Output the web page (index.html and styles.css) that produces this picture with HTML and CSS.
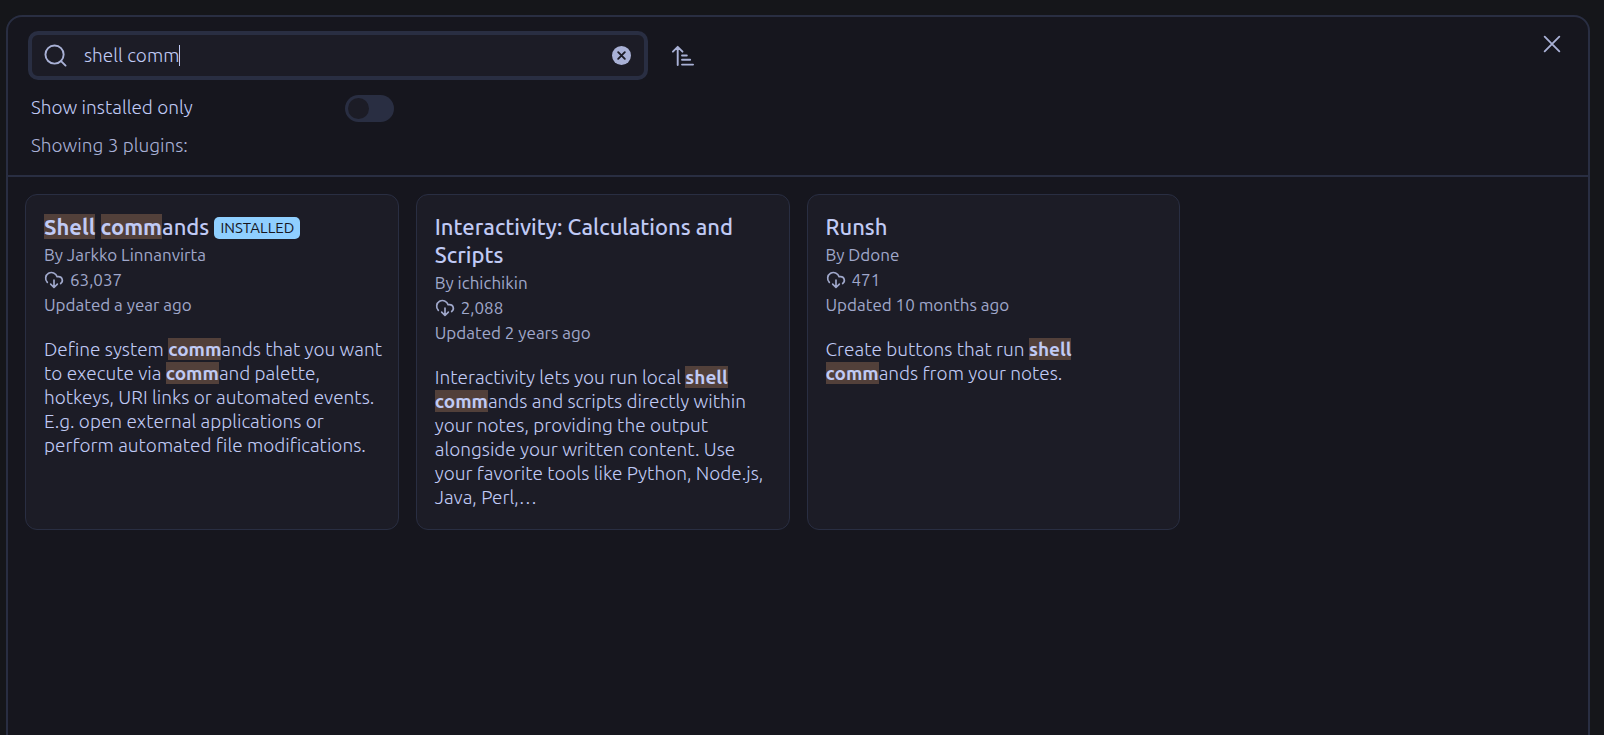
FILE: index.html
```html
<!DOCTYPE html>
<html lang="en">
<head>
  <meta charset="UTF-8">
  <title>Community plugins</title>
  <meta name="viewport" content="width=device-width, initial-scale=1.0">
  <link rel="stylesheet" href="styles.css">
</head>
<body>
  <svg class="sprite" aria-hidden="true">
    <symbol id="cloud" viewBox="0 0 24 24">
      <path d="M4 14.9A7 7 0 1 1 15.71 8h1.79a4.5 4.5 0 0 1 2.5 8.24"/>
      <path d="M12 12v9M8 17l4 4 4-4"/>
    </symbol>
  </svg>

  <main class="modal">
    <button class="icon-btn close" aria-label="Close">
      <svg viewBox="0 0 24 24"><path d="M4 4l16 16M20 4L4 20"/></svg>
    </button>

    <header class="controls">
      <div class="search-row">
        <div class="search">
          <svg class="search-icon" viewBox="0 0 24 24"><circle cx="11" cy="11" r="9.5"/><path d="M22.5 22.5l-4.7-4.7"/></svg>
          <input type="text" id="search" aria-label="Search community plugins" value="shell comm">
          <span class="caret"></span>
          <button class="icon-btn clear" aria-label="Clear search">
            <svg viewBox="0 0 20 20"><circle cx="10" cy="10" r="10"/><path d="M6.5 6.5l7 7M13.5 6.5l-7 7"/></svg>
          </button>
        </div>
        <button class="icon-btn sort" aria-label="Change sort order">
          <svg viewBox="0 0 24 24"><path d="M2 8l5-5 5 5M7 3v19M11.5 12h5M11.5 16.5h8.5M11.5 21.5h11.5"/></svg>
        </button>
      </div>
      <div class="setting">
        <label for="installed">Show installed only</label>
        <input type="checkbox" class="toggle" id="installed">
      </div>
      <div class="summary">Showing 3 plugins:</div>
    </header>

    <section class="plugins">
      <article class="card">
        <h2 class="name"><mark>Shell</mark> <mark>comm</mark>ands <span class="badge">INSTALLED</span></h2>
        <div class="meta">By Jarkko Linnanvirta</div>
        <div class="meta"><svg><use href="#cloud"/></svg>63,037</div>
        <div class="meta">Updated a year ago</div>
        <p class="desc">Define system <mark>comm</mark>ands that you want to execute via <mark>comm</mark>and palette, hotkeys, URI links or automated events. E.g. open external applications or perform automated file modifications.</p>
      </article>

      <article class="card">
        <h2 class="name">Interactivity: Calculations and Scripts</h2>
        <div class="meta">By ichichikin</div>
        <div class="meta"><svg><use href="#cloud"/></svg>2,088</div>
        <div class="meta">Updated 2 years ago</div>
        <p class="desc">Interactivity lets you run local <mark>shell</mark> <mark>comm</mark>ands and scripts directly within your notes, providing the output alongside your written content. Use your favorite tools like Python, Node.js, Java, Perl,…</p>
      </article>

      <article class="card">
        <h2 class="name">Runsh</h2>
        <div class="meta">By Ddone</div>
        <div class="meta"><svg><use href="#cloud"/></svg>471</div>
        <div class="meta">Updated 10 months ago</div>
        <p class="desc">Create buttons that run <mark>shell</mark> <mark>comm</mark>ands from your notes.</p>
      </article>
    </section>
  </main>
</body>
</html>
```

FILE: styles.css
```css
* {
  box-sizing: border-box;
}
body {
  margin: 0;
  padding: 15px 14px 0 6px;
  height: 100vh;
  overflow: hidden;
  background: #15161a;
  color: #c0caf5;
  font-family: Ubuntu, "Noto Sans", sans-serif;
  font-size: 19px;
  font-weight: 300;
  line-height: 24px;
}
.sprite {
  display: none;
}
svg {
  display: block;
  fill: none;
  stroke: currentColor;
  stroke-width: 2;
  stroke-linecap: round;
  stroke-linejoin: round;
}
.modal {
  position: relative;
  height: 100vh;
  background: #16161e;
  border: 2px solid #292e42;
  border-radius: 16px;
}
.icon-btn {
  padding: 0;
  border: none;
  background: none;
  color: #a9b1d6;
  cursor: pointer;
}
.close {
  position: absolute;
  top: 16px;
  right: 25px;
}
.close svg {
  width: 22px;
  height: 22px;
}
.controls {
  padding: 14px 20px 18px;
  border-bottom: 2px solid #292e42;
}
.search-row {
  display: flex;
  align-items: center;
  gap: 23px;
}
.search {
  display: flex;
  align-items: center;
  width: 620px;
  height: 49px;
  padding: 0 13px 0 12px;
  background: #1c1c26;
  border: 4px solid #292e42;
  border-radius: 10px;
}
.search-icon {
  width: 23px;
  height: 23px;
  color: #a9b1d6;
}
.search input {
  field-sizing: content;
  margin-left: 17px;
  padding: 0 0 2px;
  border: none;
  outline: none;
  background: none;
  color: inherit;
  font: inherit;
}
.caret {
  width: 1px;
  height: 21px;
  background: #c0caf5;
}
.clear {
  margin-left: auto;
}
.clear svg {
  width: 19px;
  height: 19px;
}
.clear circle {
  fill: currentColor;
  stroke: none;
}
.clear path {
  stroke: #1c1c26;
}
.sort svg {
  width: 23px;
  height: 23px;
}
.setting {
  display: flex;
  align-items: flex-start;
  justify-content: space-between;
  width: 363px;
  margin: 15px 0 11px 3px;
}
.toggle {
  appearance: none;
  width: 49px;
  height: 27px;
  margin: 0;
  padding: 3px;
  background: #292e42;
  border-radius: 14px;
}
.toggle::before {
  content: "";
  display: block;
  width: 21px;
  height: 21px;
  border-radius: 50%;
  background: #1c1c26;
}
.toggle:checked::before {
  margin-left: auto;
}
.summary {
  margin-left: 3px;
  color: #a9b1d6;
}
.plugins {
  display: grid;
  grid-template-columns: repeat(auto-fill, minmax(350px, 1fr));
  gap: 17px;
  padding: 17px;
}
.card {
  padding: 18px 15px 20px 18px;
  background: #1c1c26;
  border: 1px solid #292e42;
  border-radius: 12px;
}
.name {
  margin: 0 0 1px;
  font-size: 22px;
  font-weight: 500;
  line-height: 28px;
}
mark {
  background: #52403a;
  color: inherit;
  font-weight: 700;
}
.badge {
  display: inline-block;
  padding: 0 6px;
  border-radius: 5px;
  background: #8fcfff;
  color: #16161e;
  font-size: 15px;
  font-weight: 400;
  line-height: 22px;
  vertical-align: 2px;
}
.meta {
  display: flex;
  align-items: center;
  gap: 6px;
  color: #a0a8cb;
  font-size: 17px;
  font-weight: 400;
  line-height: 25px;
}
.meta svg {
  width: 20px;
  height: 20px;
}
.desc {
  margin: 20px 0 0;
}
```
